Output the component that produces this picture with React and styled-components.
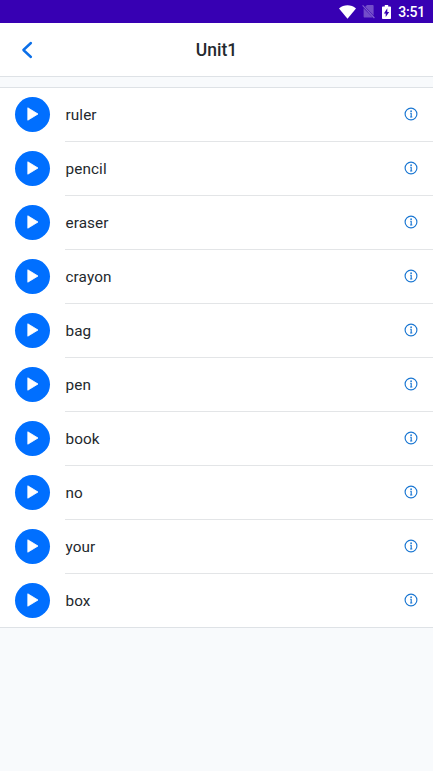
import styled, { createGlobalStyle } from "styled-components";

const GlobalStyle = createGlobalStyle`
  body {
    margin: 0;
    background: #f8fafc;
    font-family: Roboto, "Liberation Sans", sans-serif;
    color: #24292e;
  }
`;

const Screen = styled.div`
  min-height: 100vh;
  background: #f8fafc;
`;
const StatusBar = styled.div`
  display: flex;
  align-items: center;
  justify-content: flex-end;
  height: 23px;
  padding-right: 8px;
  box-sizing: border-box;
  background: #3700b3;
  color: #fff;

  svg {
    display: block;
  }
`;
const SimSlot = styled.span`
  margin: 0 7px 0 6px;
`;
const Clock = styled.span`
  margin-left: 7px;
  padding-top: 1px;
  font-size: 14px;
  font-weight: 500;
  line-height: 16px;
  letter-spacing: -0.2px;
`;
const Header = styled.header`
  display: grid;
  grid-template-columns: 54px 1fr 54px;
  align-items: center;
  height: 54px;
  box-sizing: border-box;
  border-bottom: 1px solid #dee2e6;
  background: #fff;
`;
const BackButton = styled.button`
  display: flex;
  justify-content: center;
  padding: 0;
  border: 0;
  background: none;
`;
const Title = styled.h1`
  margin: 0;
  padding-top: 1px;
  font-size: 17.5px;
  font-weight: 500;
  line-height: 22px;
  text-align: center;
`;
const List = styled.ul`
  margin: 10px 0 0;
  padding: 0;
  border-top: 1px solid #dee2e6;
  border-bottom: 1px solid #dee2e6;
  background: #fff;
  list-style: none;
`;
const Row = styled.li`
  display: flex;
  height: 54px;
  padding-left: 15px;

  &:last-child {
    height: 53px;
  }
`;
const PlayButton = styled.button`
  display: flex;
  align-items: center;
  justify-content: center;
  width: 35px;
  height: 35px;
  margin: 9px 15px 0 0;
  padding: 0 0 1px;
  border: 0;
  border-radius: 50%;
  background: #006fff;
`;
const RowBody = styled.div`
  display: flex;
  flex: 1;
  align-items: center;
  justify-content: space-between;
  padding-right: 15px;
  border-bottom: 1px solid #e3e5e7;

  ${Row}:last-child & {
    border-bottom: 0;
  }

  svg {
    margin-bottom: 1px;
  }
`;
const Word = styled.span`
  padding: 1px 0 0 0.5px;
  font-size: 15.3px;
  line-height: 20px;
  letter-spacing: 0.1px;
`;

const words = ["ruler", "pencil", "eraser", "crayon", "bag", "pen", "book", "no", "your", "box"];

const WifiIcon = () => (
  <svg width="17" height="14" viewBox="0 0 17 14">
    <path d="M0 3.4C4.8-.8 12.2-.8 17 3.4L8.5 13.8Z" fill="#fff" />
  </svg>
);

const NoSimIcon = () => (
  <svg width="13" height="15" viewBox="0 0 13 15">
    <path d="M5 1h5.6c.6 0 1 .4 1 1v9.6L3.2 2.8Z M1.6 4.2 10.8 13.6H2.6c-.6 0-1-.4-1-1Z" fill="#fff" opacity=".3" />
    <path d="M.6 1.4 12.4 14" stroke="#fff" strokeWidth="1.1" opacity=".38" />
  </svg>
);

const BatteryIcon = () => (
  <svg width="9" height="14" viewBox="0 0 9 14">
    <path d="M2.8 0h3.4v1.4h2c.5 0 .8.3.8.8v11c0 .5-.3.8-.8.8H.8c-.5 0-.8-.3-.8-.8v-11c0-.5.3-.8.8-.8h2Z" fill="#fff" />
    <path d="M5.3 3.3v3.6h1.9l-3.5 5V8.4H1.9Z" fill="#3700b3" />
  </svg>
);

const BackIcon = () => (
  <svg width="12" height="18" viewBox="0 0 12 18">
    <path d="M9.9 2 2.4 9l7.5 7" fill="none" stroke="#0b6fe8" strokeWidth="2.4" strokeLinecap="round" strokeLinejoin="round" />
  </svg>
);

const PlayIcon = () => (
  <svg width="12" height="14" viewBox="0 0 12 14">
    <path d="M.8.8 11 7 .8 13.2Z" fill="#fff" stroke="#fff" strokeWidth=".8" strokeLinejoin="round" />
  </svg>
);

const InfoIcon = () => (
  <svg width="14" height="14" viewBox="0 0 14 14">
    <circle cx="7" cy="7" r="5.9" fill="none" stroke="#1976d2" strokeWidth="1.15" />
    <path d="M6.2 6.2H7.2V10M6.1 10h2.2" fill="none" stroke="#1976d2" strokeWidth="1.15" />
    <circle cx="7.1" cy="4.2" r=".85" fill="#1976d2" />
  </svg>
);

export default function App() {
  return (
    <>
      <GlobalStyle />
      <Screen>
        <StatusBar>
          <WifiIcon />
          <SimSlot>
            <NoSimIcon />
          </SimSlot>
          <BatteryIcon />
          <Clock>3:51</Clock>
        </StatusBar>
        <Header>
          <BackButton aria-label="Back">
            <BackIcon />
          </BackButton>
          <Title>Unit1</Title>
        </Header>
        <List>
          {words.map((word) => (
            <Row key={word}>
              <PlayButton aria-label={`Play ${word}`}>
                <PlayIcon />
              </PlayButton>
              <RowBody>
                <Word>{word}</Word>
                <InfoIcon />
              </RowBody>
            </Row>
          ))}
        </List>
      </Screen>
    </>
  );
}
